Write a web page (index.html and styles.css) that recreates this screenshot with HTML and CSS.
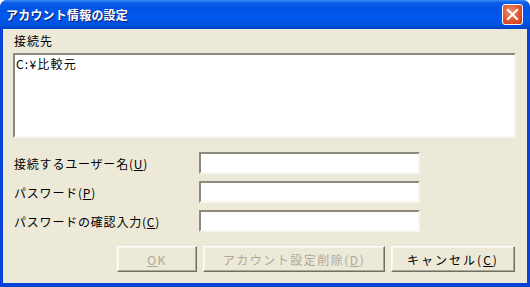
FILE: index.html
```html
<!DOCTYPE html>
<html lang="ja">
  <head>
    <meta charset="UTF-8" />
    <title>アカウント情報の設定</title>
    <link rel="stylesheet" href="styles.css">
  </head>
  <body>
    <div class="window">
      <div class="titlebar">
        <span class="title">アカウント情報の設定</span>
        <button class="close" type="button" aria-label="閉じる">
          <svg width="13" height="13" viewBox="0 0 13 13">
            <path d="M2 2 L11 11 M11 2 L2 11" stroke="#fff" stroke-width="2.2" stroke-linecap="square" />
          </svg>
        </button>
      </div>
      <div class="client">
        <div class="label-top">接続先</div>
        <div class="list">C:¥比較元</div>

        <div class="fields">
          <label for="user">接続するユーザー名(<u>U</u>)</label>
          <input type="text" id="user" class="field" />
          <label for="pass">パスワード(<u>P</u>)</label>
          <input type="password" id="pass" class="field" />
          <label for="pass2">パスワードの確認入力(<u>C</u>)</label>
          <input type="password" id="pass2" class="field" />
        </div>

        <div class="buttons">
          <button class="btn btn-ok" disabled><u>O</u>K</button>
          <button class="btn btn-del" disabled>アカウント設定削除(<u>D</u>)</button>
          <button class="btn btn-cancel">キャンセル(<u>C</u>)</button>
        </div>
      </div>
    </div>
  </body>
</html>
```

FILE: styles.css
```css
html, body {
  margin: 0;
  padding: 0;
  background: #ffffff;
}
body {
  font-family: "Noto Sans CJK JP", "DejaVu Sans", sans-serif;
  font-size: 12px;
  color: #000;
}
.window {
  width: 530px;
  height: 287px;
  box-sizing: border-box;
  display: flex;
  flex-direction: column;
  background: #0842d6;
  border-radius: 7px 7px 0 0;
  padding: 0 3px 4px 3px;
  overflow: hidden;
}
.titlebar {
  height: 29px;
  margin: 0 -3px;
  padding: 0 6px;
  display: flex;
  align-items: center;
  justify-content: space-between;
  background: linear-gradient(to bottom, #3a8cf8 0%, #0a5ce8 10%, #0054e3 30%, #0058ee 60%, #0052e0 85%, #0041c8 100%);
  border-radius: 7px 7px 0 0;
}
.title {
  color: #fff;
  font-weight: bold;
  font-size: 12px;
  text-shadow: 1px 1px 0 #0a1e73;
  letter-spacing: 0.2px;
  margin-top: -1px;
}
.close {
  width: 21px;
  height: 21px;
  margin-right: 1px;
  padding: 0;
  border: 1px solid #fff;
  border-radius: 3px;
  background: radial-gradient(circle at 40% 35%, #f08d6c 0%, #e0552f 55%, #c63a16 100%);
  display: flex;
  align-items: center;
  justify-content: center;
}
.client {
  flex: 1;
  background: #ece9d8;
  padding: 5px 11px 0 10px;
  display: flex;
  flex-direction: column;
}
.label-top {
  height: 19px;
  line-height: 14px;
  padding-left: 1px;
  letter-spacing: 1px;
}
.list {
  height: 85px;
  box-sizing: border-box;
  background: #fff;
  border-top: 2px solid #8c8a7e;
  border-left: 2px solid #8c8a7e;
  border-right: 2px solid #f6f5ee;
  border-bottom: 2px solid #f6f5ee;
  padding: 2px 1px;
  line-height: 14px;
  letter-spacing: 1.2px;
}
.fields {
  margin-top: 14px;
  display: grid;
  grid-template-columns: 185px 221px;
  row-gap: 7px;
  align-items: center;
  padding-left: 1px;
}
.fields label {
  letter-spacing: 0.8px;
}
.field {
  height: 22px;
  box-sizing: border-box;
  margin: 0;
  background: #fff;
  border-top: 2px solid #8c8a7e;
  border-left: 2px solid #8c8a7e;
  border-right: 2px solid #f6f5ee;
  border-bottom: 2px solid #f6f5ee;
  outline: none;
}
.buttons {
  margin-top: 14px;
  display: flex;
  justify-content: flex-end;
  gap: 6px;
  padding-right: 1px;
}
.btn {
  height: 26px;
  box-sizing: border-box;
  margin: 0;
  padding: 0;
  font-family: inherit;
  font-size: 12px;
  letter-spacing: 1.5px;
  color: #000;
  background: #ece9d8;
  border-top: 1px solid #fff;
  border-left: 1px solid #fff;
  border-right: 1px solid #716f64;
  border-bottom: 1px solid #716f64;
  box-shadow: inset -1px -1px 0 #aca899, inset 1px 1px 0 #f6f5ee;
}
.btn-cancel {
  letter-spacing: 2px;
}
.btn:disabled {
  color: #aca899;
}
.btn-ok {
  width: 80px;
}
.btn-del {
  width: 182px;
}
.btn-cancel {
  width: 124px;
}
```
